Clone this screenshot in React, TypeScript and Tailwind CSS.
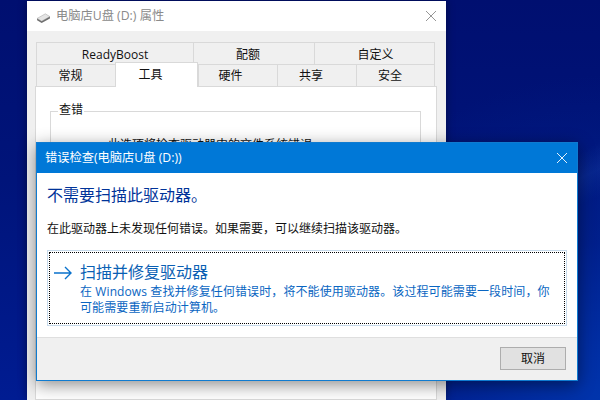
const font = "font-['Open_Sans','Noto_Sans_CJK_SC',sans-serif]";

function Tab({ label, className }: { label: string; className: string }) {
  return (
    <div className={`flex items-center justify-center border-t border-l border-[#d9d9d9] bg-[#f0f0f0] text-[12px] text-[#111] ${className}`}>
      {label}
    </div>
  );
}

function DriveIcon() {
  return (
    <svg width="15" height="11" viewBox="0 0 16 12" className="mt-[3px]">
      <path d="M1 7 L10 2 L15 5 L6 10 Z" fill="#e4e4e4" stroke="#a8a8a8" strokeWidth="0.6" />
      <path d="M1 7 L6 10 L15 5 L15 7 L6 12 L1 9 Z" fill="#6f6f6f" />
    </svg>
  );
}

function CloseIcon({ color, size }: { color: string; size: number }) {
  return (
    <svg width={size} height={size} viewBox="0 0 10 10" fill="none" stroke={color} strokeWidth="0.9">
      <path d="M0 0 L10 10 M10 0 L0 10" />
    </svg>
  );
}

function PropertiesWindow() {
  return (
    <div className="absolute left-[27px] top-[1px] h-[399px] w-[419px] bg-[#f0f0f0] shadow-[0_0_8px_rgba(0,0,0,0.4)]">
      <div className="flex h-[30px] items-center bg-white pl-[9px] pr-[10px]">
        <DriveIcon />
        <span className="ml-[5px] text-[12.25px] leading-none text-[#8a8a8a]">电脑店U盘 (D:) 属性</span>
        <span className="ml-auto flex">
          <CloseIcon color="#8a8a8a" size={10} />
        </span>
      </div>

      <div className="ml-[9px] mt-[11px] w-[399px]">
        <div className="flex h-[22px] border-r border-[#d9d9d9]">
          <Tab label="ReadyBoost" className="w-[157px] pt-[2px] text-[12.5px]" />
          <Tab label="配额" className="w-[121px] pr-[12px] pt-[2px]" />
          <Tab label="自定义" className="flex-1 pl-[2px] pt-[2px]" />
        </div>
        <div className="relative flex h-[22px] border-r border-[#d9d9d9]">
          <Tab label="常规" className="w-[79px] pr-[11px]" />
          <div className="w-[83px]" />
          <Tab label="硬件" className="w-[79px] pr-[15px]" />
          <Tab label="共享" className="w-[79px] pr-[12px]" />
          <Tab label="安全" className="flex-1 pr-[11px]" />
          <div className="absolute left-[79px] top-[-2px] z-10 flex h-[25px] w-[83px] items-center justify-center border-x border-t border-[#d9d9d9] bg-white pr-[12px] text-[12px] text-[#111]">
            工具
          </div>
        </div>
      </div>

      <div className="ml-[8px] h-[314px] w-[402px] border border-[#d9d9d9] bg-white px-[14px] pt-[24px]">
        <div className="relative h-[200px] w-[371px] border border-[#d9d9d9] pl-[57px] pt-[24px] text-[12px] text-[#111]">
          <span className="absolute left-[7px] top-[-8px] bg-white px-[1px] leading-none">查错</span>
          此选项将检查驱动器中的文件系统错误。
        </div>
      </div>
    </div>
  );
}

function ErrorDialog() {
  return (
    <div className="absolute left-[36px] top-[142px] h-[239px] w-[542px] border border-[#0f7bd0] bg-white shadow-[0_4px_16px_rgba(0,0,0,0.45)]">
      <div className="flex h-[30px] items-center bg-[#0078d7] pl-[8px] pr-[10px] text-[12.25px] text-white">
        <span>错误检查(电脑店U盘 (D:))</span>
        <span className="ml-auto flex">
          <CloseIcon color="#ffffff" size={10} />
        </span>
      </div>

      <div className="h-[164px] px-[10px] pt-[11px]">
        <h1 className="text-[16px] font-normal leading-[22px] text-[#003399]">不需要扫描此驱动器。</h1>
        <p className="mt-[14px] text-[12px] leading-[18px] text-[#111]">
          在此驱动器上未发现任何错误。如果需要，可以继续扫描该驱动器。
        </p>
        <div className="mt-[12px] h-[76px] w-[520px] border border-[#c5d9ea] p-[1px]">
          <div className="flex h-full border border-dotted border-black pl-[4px] pt-[8px]">
            <svg width="18" height="14" viewBox="0 0 18 14" fill="none" stroke="#0a72cc" strokeWidth="1.4" className="mt-[5px] shrink-0">
              <path d="M0 7 H17 M11 1 L17 7 L11 13" />
            </svg>
            <div className="ml-[8px]">
              <div className="text-[16px] leading-[22px] text-[#0a5fb4]">扫描并修复驱动器</div>
              <div className="mt-[1px] w-[476px] text-[12px] leading-[16px] tracking-[0.1px] text-[#0a66c2]">
                在 Windows 查找并修复任何错误时，将不能使用驱动器。该过程可能需要一段时间，你可能需要重新启动计算机。
              </div>
            </div>
          </div>
        </div>
      </div>

      <div className="flex h-[43px] items-start justify-end border-t border-[#dfdfdf] bg-[#f0f0f0] pr-[11px] pt-[9px]">
        <button className="h-[23px] w-[66px] border border-[#adadad] bg-[#e1e1e1] text-[12px] text-[#111]">取消</button>
      </div>
    </div>
  );
}

export default function App() {
  return (
    <div className={`relative h-[400px] w-[600px] overflow-hidden bg-[linear-gradient(155deg,transparent_62%,rgba(30,70,170,0.35)_66%,transparent_70%),linear-gradient(to_bottom,#000f70_0%,#00147a_45%,#001c92_100%)] ${font}`}>
      <div className="absolute inset-0 bg-[radial-gradient(circle_at_100%_100%,#0034ac_0%,rgba(0,40,150,0.5)_22%,transparent_45%)]" />
      <PropertiesWindow />
      <ErrorDialog />
    </div>
  );
}
